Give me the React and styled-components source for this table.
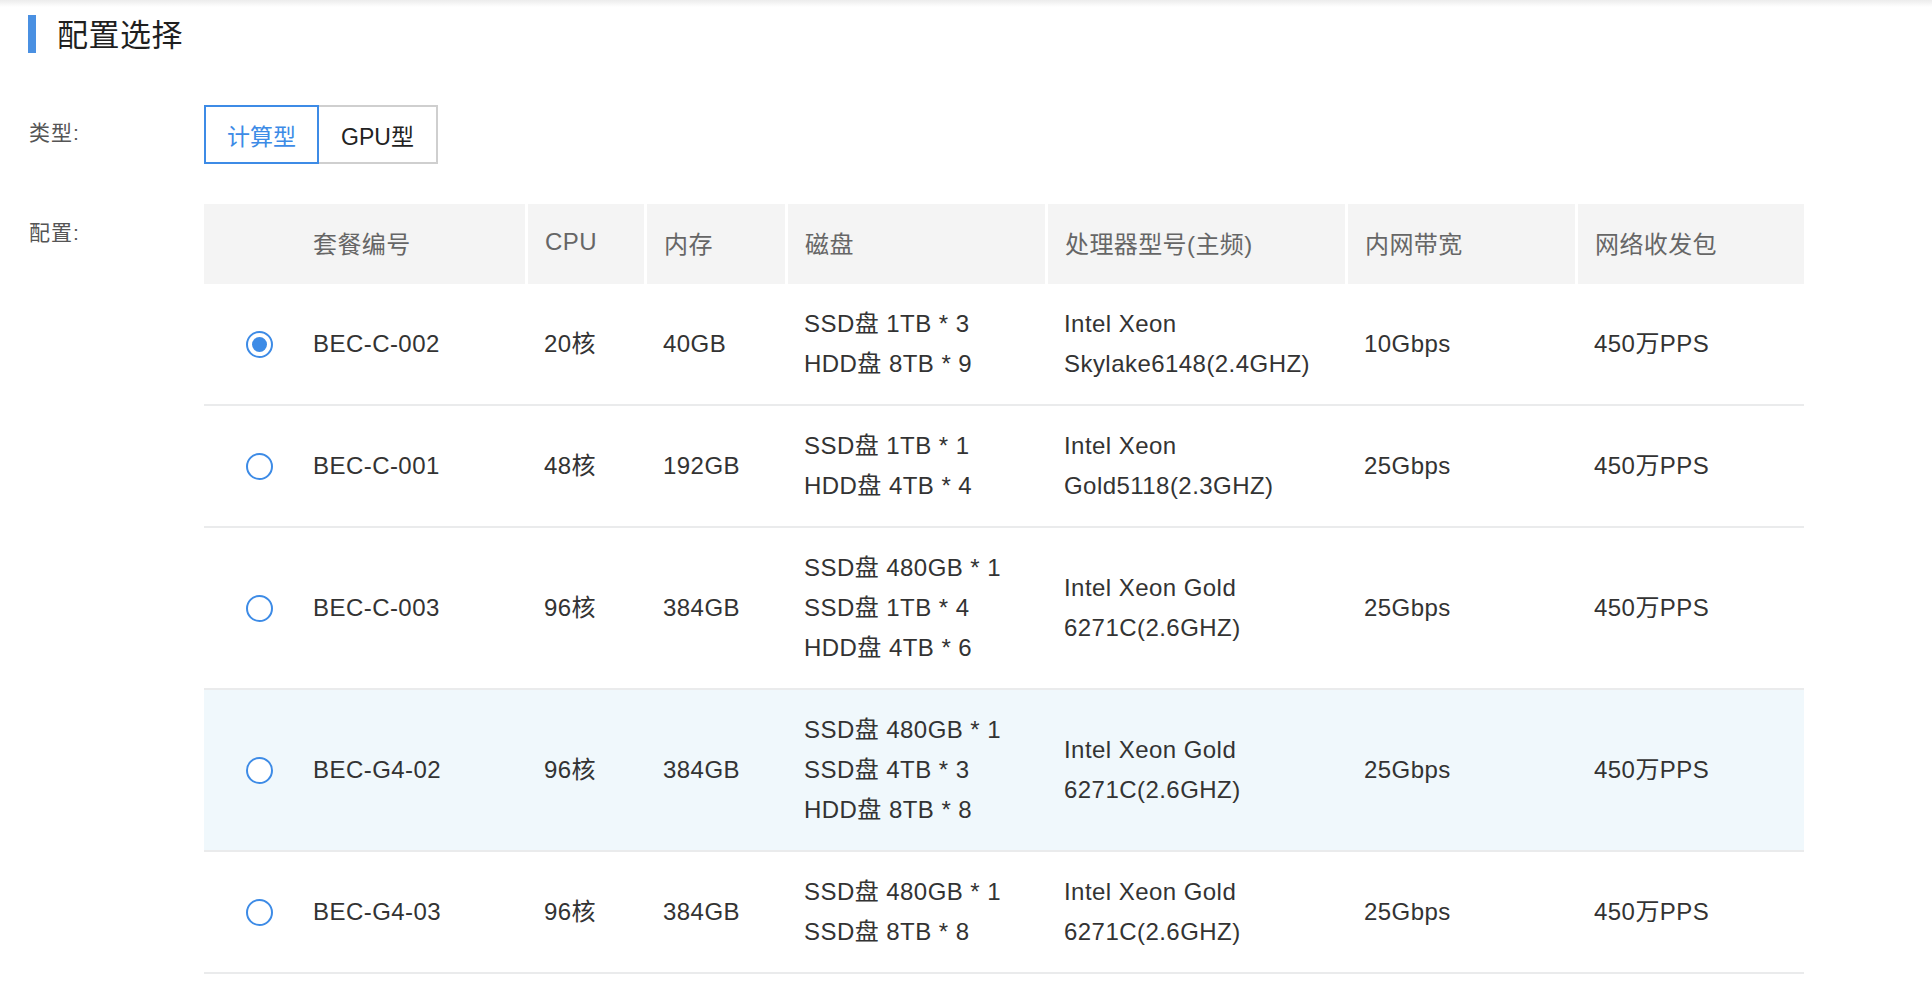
import React from "react";
import styled, { createGlobalStyle } from "styled-components";

const blue = "#3d8be6";
const COLS = "88px 233px 119px 141px 260px 300px 230px 229px";

const GlobalStyle = createGlobalStyle`
  body {
    margin: 0;
    background: #fff;
    font-family: "Liberation Sans", "Noto Sans CJK SC", sans-serif;
    color: #333;
  }
`;

const Page = styled.div`
  min-height: 990px;
  padding-top: 15px;
  box-sizing: border-box;
  background: linear-gradient(to bottom, #ececec 0, #fff 7px);
`;

const TitleRow = styled.div`
  display: flex;
  align-items: center;
  gap: 21px;
  height: 38px;
  padding-left: 28px;
`;

const TitleBar = styled.span`
  width: 8px;
  height: 38px;
  background: #4a90e2;
`;

const Title = styled.h2`
  margin: 0;
  padding-bottom: 4px;
  font-size: 31px;
  font-weight: 400;
  color: #1f1f1f;
  letter-spacing: 0.5px;
`;

const FormRow = styled.div`
  display: grid;
  grid-template-columns: 175px auto;
  align-items: ${(p) => p.$align || "start"};
  padding-left: 29px;
  margin-top: ${(p) => p.$top}px;
`;

const Label = styled.div`
  font-size: 21px;
  line-height: 30px;
  color: #555;
  letter-spacing: 1px;
  padding-top: ${(p) => p.$pad || 0}px;
  padding-bottom: ${(p) => p.$padBottom || 0}px;
`;

const Segmented = styled.div`
  display: flex;
`;

const SegButton = styled.button`
  position: relative;
  width: ${(p) => p.$w}px;
  height: 59px;
  margin-left: ${(p) => (p.$first ? 0 : -2)}px;
  padding: 0;
  background: #fff;
  border: 2px solid ${(p) => (p.$active ? blue : "#cfcfcf")};
  z-index: ${(p) => (p.$active ? 1 : 0)};
  color: ${(p) => (p.$active ? blue : "#222")};
  font-family: inherit;
  font-size: 23px;
  cursor: pointer;
`;

const Table = styled.div`
  width: 1600px;
`;

const HeadRow = styled.div`
  display: grid;
  grid-template-columns: ${COLS};
  height: 80px;
  background: #f4f4f4;
`;

const HeadCell = styled.div`
  display: flex;
  align-items: center;
  padding-left: ${(p) => (p.$divider ? 17 : 21)}px;
  padding-bottom: 4px;
  border-left: ${(p) => (p.$divider ? "3px solid #fff" : "none")};
  font-size: 24px;
  color: #666;
  letter-spacing: 0.4px;
`;

const Row = styled.div`
  display: grid;
  grid-template-columns: ${COLS};
  padding: 20px 0;
  border-bottom: 2px solid #eaebec;
  background: ${(p) => (p.$hover ? "#f0f8fc" : "#fff")};
`;

const Cell = styled.div`
  display: flex;
  flex-direction: column;
  justify-content: center;
  padding-left: ${(p) => (p.$first ? 21 : 19)}px;
  font-size: 24px;
  line-height: 40px;
  color: #333;
  letter-spacing: 0.45px;
  white-space: nowrap;
`;

const RadioCell = styled.div`
  display: flex;
  align-items: center;
  padding-left: 42px;
`;

const Radio = styled.span`
  width: 27px;
  height: 27px;
  box-sizing: border-box;
  border: 2px solid ${blue};
  border-radius: 50%;
  display: flex;
  align-items: center;
  justify-content: center;
  background: #fff;

  &::after {
    content: "";
    width: 15px;
    height: 15px;
    border-radius: 50%;
    background: ${(p) => (p.$checked ? blue : "transparent")};
  }
`;

const heads = ["", "套餐编号", "CPU", "内存", "磁盘", "处理器型号(主频)", "内网带宽", "网络收发包"];

const plans = [
  {
    id: "BEC-C-002",
    cpu: "20核",
    mem: "40GB",
    disk: ["SSD盘 1TB * 3", "HDD盘 8TB * 9"],
    proc: ["Intel Xeon", "Skylake6148(2.4GHZ)"],
    bw: "10Gbps",
    pps: "450万PPS",
    checked: true,
  },
  {
    id: "BEC-C-001",
    cpu: "48核",
    mem: "192GB",
    disk: ["SSD盘 1TB * 1", "HDD盘 4TB * 4"],
    proc: ["Intel Xeon", "Gold5118(2.3GHZ)"],
    bw: "25Gbps",
    pps: "450万PPS",
  },
  {
    id: "BEC-C-003",
    cpu: "96核",
    mem: "384GB",
    disk: ["SSD盘 480GB * 1", "SSD盘 1TB * 4", "HDD盘 4TB * 6"],
    proc: ["Intel Xeon Gold", "6271C(2.6GHZ)"],
    bw: "25Gbps",
    pps: "450万PPS",
  },
  {
    id: "BEC-G4-02",
    cpu: "96核",
    mem: "384GB",
    disk: ["SSD盘 480GB * 1", "SSD盘 4TB * 3", "HDD盘 8TB * 8"],
    proc: ["Intel Xeon Gold", "6271C(2.6GHZ)"],
    bw: "25Gbps",
    pps: "450万PPS",
    hover: true,
  },
  {
    id: "BEC-G4-03",
    cpu: "96核",
    mem: "384GB",
    disk: ["SSD盘 480GB * 1", "SSD盘 8TB * 8"],
    proc: ["Intel Xeon Gold", "6271C(2.6GHZ)"],
    bw: "25Gbps",
    pps: "450万PPS",
  },
];

function Lines({ items }) {
  return items.map((t) => <div key={t}>{t}</div>);
}

export default function App() {
  return (
    <>
      <GlobalStyle />
      <Page>
        <TitleRow>
          <TitleBar />
          <Title>配置选择</Title>
        </TitleRow>

        <FormRow $top={52} $align="center">
          <Label $padBottom={4}>类型:</Label>
          <Segmented>
            <SegButton $first $active $w={115}>计算型</SegButton>
            <SegButton $w={121}>GPU型</SegButton>
          </Segmented>
        </FormRow>

        <FormRow $top={40}>
          <Label $pad={14}>配置:</Label>
          <Table>
            <HeadRow>
              {heads.map((h, i) => (
                <HeadCell key={i} $divider={i > 1}>
                  {h}
                </HeadCell>
              ))}
            </HeadRow>
            {plans.map((p) => (
              <Row key={p.id} $hover={p.hover}>
                <RadioCell>
                  <Radio $checked={p.checked} />
                </RadioCell>
                <Cell $first>{p.id}</Cell>
                <Cell>{p.cpu}</Cell>
                <Cell>{p.mem}</Cell>
                <Cell>
                  <Lines items={p.disk} />
                </Cell>
                <Cell>
                  <Lines items={p.proc} />
                </Cell>
                <Cell>{p.bw}</Cell>
                <Cell>{p.pps}</Cell>
              </Row>
            ))}
          </Table>
        </FormRow>
      </Page>
    </>
  );
}
